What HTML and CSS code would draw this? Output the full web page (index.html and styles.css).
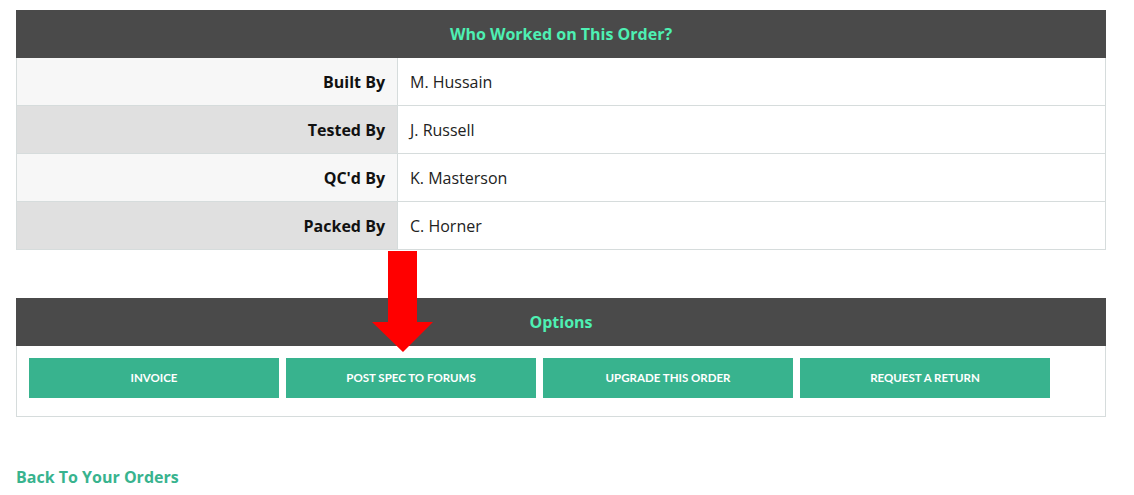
FILE: index.html
```html
<!DOCTYPE html>
<html>
<head>
<meta charset="utf-8">
<link rel="stylesheet" href="styles.css">
</head>
<body>
<div class="page">
  <section class="panel">
    <div class="panel-head">Who Worked on This Order?</div>
    <div class="row odd"><div class="label">Built By</div><div class="value">M. Hussain</div></div>
    <div class="row even"><div class="label">Tested By</div><div class="value">J. Russell</div></div>
    <div class="row odd"><div class="label">QC'd By</div><div class="value">K. Masterson</div></div>
    <div class="row even"><div class="label">Packed By</div><div class="value">C. Horner</div></div>
  </section>

  <section class="panel options">
    <div class="panel-head">Options</div>
    <div class="buttons">
      <a class="btn">INVOICE</a>
      <a class="btn">POST SPEC TO FORUMS</a>
      <a class="btn">UPGRADE THIS ORDER</a>
      <a class="btn">REQUEST A RETURN</a>
    </div>
  </section>

  <a class="back">Back To Your Orders</a>

  <svg class="arrow" width="62" height="102" viewBox="0 0 62 102">
    <polygon points="16,0 45,0 45,71 61,71 31,101 0,71 16,71" fill="#ff0000"/>
  </svg>
</div>
</body>
</html>
```

FILE: styles.css
```css
html, body { margin: 0; padding: 0; background: #fff; }
body { font-family: "Open Sans", "Liberation Sans", sans-serif; }
.page {
  position: relative;
  padding: 10px 28px 0 16px;
  display: flex;
  flex-direction: column;
}
.panel {
  border: 1px solid #d6dcdc;
  border-top: none;
}
.panel-head {
  background: #4a4a4a;
  color: #4ef0b3;
  font-weight: 700;
  font-size: 16px;
  height: 48px;
  line-height: 48px;
  text-align: center;
  margin: 0 -1px;
}
.row {
  display: flex;
  height: 48px;
  border-top: 1px solid #d6dcdc;
  box-sizing: border-box;
}
.row:nth-of-type(2) { border-top: none; height: 47px; }
.label {
  width: 381px;
  box-sizing: border-box;
  border-right: 1px solid #d6dcdc;
  text-align: right;
  padding-right: 12px;
  padding-top: 1px;
  font-weight: 700;
  font-size: 16px;
  line-height: 46px;
  color: #111;
}
.odd .label { background: #f7f7f7; }
.even .label { background: #e0e0e0; }
.value {
  flex: 1;
  padding-left: 12px;
  padding-top: 1px;
  font-size: 16px;
  line-height: 46px;
  color: #222;
}
.options { margin-top: 48px; }
.buttons {
  display: flex;
  gap: 7px;
  padding: 12px 12px 18px 12px;
}
.btn {
  width: 250px;
  height: 40px;
  box-sizing: border-box;
  padding-bottom: 1px;
  background: #38b38e;
  color: #fff;
  font-family: Lato, "Liberation Sans", sans-serif;
  font-weight: 700;
  font-size: 11.5px;
  display: flex;
  align-items: center;
  justify-content: center;
}
.back {
  margin-top: 49px;
  color: #38b38e;
  font-weight: 700;
  font-size: 16px;
  line-height: 22px;
}
.arrow {
  position: absolute;
  left: 372px;
  top: 251px;
}
```
